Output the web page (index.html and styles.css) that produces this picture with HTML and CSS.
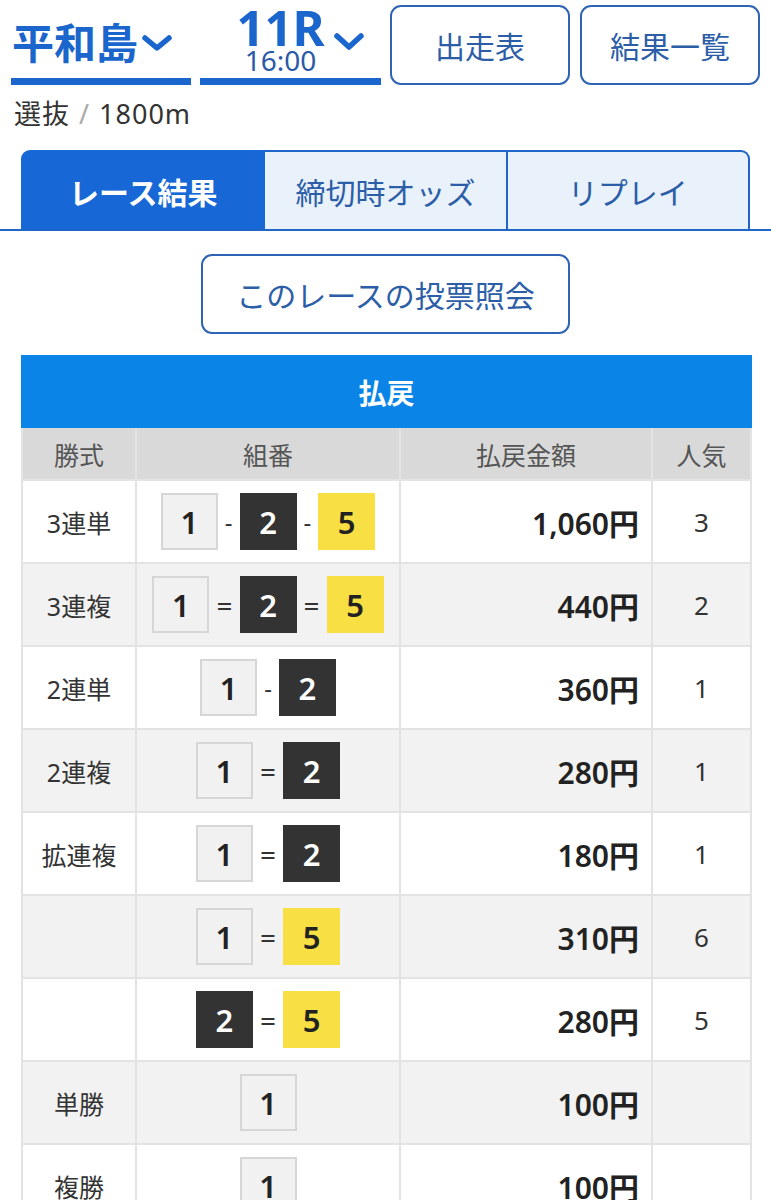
FILE: index.html
```html
<!DOCTYPE html>
<html lang="ja">
<head>
<meta charset="utf-8">
<title>払戻</title>
<link rel="stylesheet" href="styles.css">
</head>
<body>
<header class="top">
  <div class="sel sel-place">
    <span class="place">平和島</span>
    <svg class="chev" viewBox="0 0 32 18" width="32" height="18"><polyline points="4,4 16,14 28,4" fill="none" stroke="#1a66cc" stroke-width="5.5" stroke-linecap="round" stroke-linejoin="round"/></svg>
  </div>
  <div class="sel sel-race">
    <div class="race">
      <span class="rno">11R</span>
      <span class="rtime">16:00</span>
    </div>
    <svg class="chev" viewBox="0 0 32 20" width="32" height="20"><polyline points="4,4 16,15 28,4" fill="none" stroke="#1a66cc" stroke-width="5.5" stroke-linecap="round" stroke-linejoin="round"/></svg>
  </div>
  <a class="hbtn">出走表</a>
  <a class="hbtn">結果一覧</a>
</header>
<div class="info">選抜 <span class="slash">/</span> 1800m</div>
<nav class="tabwrap">
  <div class="tabs">
    <div class="tab active">レース結果</div>
    <div class="tab">締切時オッズ</div>
    <div class="tab">リプレイ</div>
  </div>
</nav>
<div class="btnrow"><a class="vbtn">このレースの投票照会</a></div>
<table class="pay">
  <colgroup><col class="c1"><col class="c2"><col class="c3"><col class="c4"></colgroup>
  <thead>
    <tr><th colspan="4" class="title">払戻</th></tr>
    <tr class="hd"><th>勝式</th><th>組番</th><th>払戻金額</th><th>人気</th></tr>
  </thead>
  <tbody>
    <tr><td class="kind">3連単</td><td><div class="combo"><span class="b b1">1</span><span class="sep">-</span><span class="b b2">2</span><span class="sep">-</span><span class="b b5">5</span></div></td><td class="amt">1,060円</td><td class="pop">3</td></tr>
    <tr class="g"><td class="kind">3連複</td><td><div class="combo eq"><span class="b b1">1</span><span class="sep">=</span><span class="b b2">2</span><span class="sep">=</span><span class="b b5">5</span></div></td><td class="amt">440円</td><td class="pop">2</td></tr>
    <tr><td class="kind">2連単</td><td><div class="combo"><span class="b b1">1</span><span class="sep">-</span><span class="b b2">2</span></div></td><td class="amt">360円</td><td class="pop">1</td></tr>
    <tr class="g"><td class="kind">2連複</td><td><div class="combo eq"><span class="b b1">1</span><span class="sep">=</span><span class="b b2">2</span></div></td><td class="amt">280円</td><td class="pop">1</td></tr>
    <tr><td class="kind">拡連複</td><td><div class="combo eq"><span class="b b1">1</span><span class="sep">=</span><span class="b b2">2</span></div></td><td class="amt">180円</td><td class="pop">1</td></tr>
    <tr class="g"><td class="kind"></td><td><div class="combo eq"><span class="b b1">1</span><span class="sep">=</span><span class="b b5">5</span></div></td><td class="amt">310円</td><td class="pop">6</td></tr>
    <tr><td class="kind"></td><td><div class="combo eq"><span class="b b2">2</span><span class="sep">=</span><span class="b b5">5</span></div></td><td class="amt">280円</td><td class="pop">5</td></tr>
    <tr class="g"><td class="kind">単勝</td><td><div class="combo"><span class="b b1">1</span></div></td><td class="amt">100円</td><td class="pop"></td></tr>
    <tr><td class="kind">複勝</td><td><div class="combo"><span class="b b1">1</span></div></td><td class="amt">100円</td><td class="pop"></td></tr>
  </tbody>
</table>
</body>
</html>
```
FILE: styles.css
```css
* { box-sizing: border-box; }
body {
  margin: 0;
  width: 771px;
  background: #fff;
  color: #333;
  font-family: "Noto Sans CJK JP", "Noto Sans", sans-serif;
}
.top {
  display: flex;
  gap: 9px;
  padding: 5px 0 0 11px;
}
.sel {
  width: 180px;
  height: 80px;
  border-bottom: 7px solid #1a66cc;
  display: flex;
  align-items: center;
  color: #1a66cc;
}
.sel-place { padding-left: 1px; }
.place {
  font-size: 42px;
  font-weight: 700;
  line-height: 1;
  margin-top: -2px;
}
.sel-place .chev { margin-left: 3px; margin-top: 2px; }
.sel-race { width: 181px; justify-content: center; padding-left: 20px; }
.race {
  align-self: flex-start;
  margin-top: 3px;
  display: flex;
  flex-direction: column;
  align-items: center;
}
.rno {
  font-family: "Noto Sans", sans-serif;
  font-size: 49px;
  font-weight: 700;
  line-height: 38px;
}
.rtime {
  font-family: "Noto Sans", sans-serif;
  font-size: 28px;
  line-height: 24px;
  color: #2a5aa8;
  margin-top: 2px;
}
.sel-race .chev { margin-left: 8px; margin-top: 0; }
.hbtn {
  width: 180px;
  height: 80px;
  border: 2px solid #2f64b4;
  border-radius: 11px;
  display: flex;
  align-items: center;
  justify-content: center;
  font-size: 30px;
  color: #2c5ea8;
}
.hbtn + .hbtn { margin-left: 1px; }
.info {
  margin: 13px 0 0 14px;
  font-family: "Noto Sans", "Noto Sans CJK JP", sans-serif;
  font-size: 27px;
  line-height: 32px;
  color: #333;
  letter-spacing: 1px;
}
.slash { color: #aaa; margin: 0 1px; }
.tabwrap {
  margin-top: 20px;
  padding: 0 21px;
  border-bottom: 2px solid #1f66c8;
}
.tabs {
  display: flex;
  height: 79px;
}
.tab {
  flex: 1;
  display: flex;
  align-items: center;
  justify-content: center;
  background: #e9f1fb;
  color: #2c5ea8;
  font-size: 30px;
  border: 2px solid #1f66c8;
  border-bottom: none;
  border-left: none;
}
.tab:first-child { border-radius: 9px 0 0 0; border-left: 2px solid #1f66c8; }
.tab:last-child { border-radius: 0 9px 0 0; }
.tab.active {
  background: #1768d6;
  color: #fff;
  font-weight: 700;
  border-color: #1768d6;
}
.btnrow {
  display: flex;
  justify-content: center;
  margin-top: 23px;
}
.vbtn {
  width: 369px;
  height: 80px;
  border: 2px solid #2f64b4;
  border-radius: 11px;
  display: flex;
  align-items: center;
  justify-content: center;
  font-size: 30px;
  color: #2c5ea8;
}
.pay {
  margin: 21px 0 0 21px;
  width: 729px;
  border-collapse: collapse;
  table-layout: fixed;
}
.c1 { width: 114px; }
.c2 { width: 264px; }
.c3 { width: 252px; }
.c4 { width: 99px; }
.pay th, .pay td {
  border: 2px solid #e3e3e3;
  padding: 0;
}
.pay .title {
  height: 71px;
  background: #0a85e7;
  border-color: #0a85e7;
  color: #fff;
  font-size: 28px;
  font-weight: 700;
}
.hd th {
  height: 53px;
  background: #d9d9d9;
  color: #555;
  font-size: 25px;
  font-weight: 400;
}
.pay tbody tr { height: 83px; }
.pay tbody tr.g { background: #f2f2f2; }
.kind {
  text-align: center;
  font-family: "Noto Sans", "Noto Sans CJK JP", sans-serif;
  font-size: 25px;
  color: #333;
}
.combo {
  display: flex;
  align-items: center;
  justify-content: center;
  gap: 7px;
}
.b {
  width: 57px;
  height: 57px;
  display: flex;
  align-items: center;
  justify-content: center;
  font-family: "Noto Sans", sans-serif;
  font-size: 31px;
  font-weight: 600;
}
.b1 { background: #f1f1f1; border: 2px solid #d6d6d6; color: #222; }
.b2 { background: #333; color: #fff; }
.b5 { background: #f8df44; color: #222; }
.sep { font-size: 24px; color: #333; font-family: "Noto Sans", sans-serif; }
.combo.eq .sep { font-size: 28px; }
.amt {
  text-align: right;
  padding-right: 12px !important;
  font-family: "Noto Sans", "Noto Sans CJK JP", sans-serif;
  font-size: 30px;
  font-weight: 600;
  color: #222;
}
.pop {
  text-align: center;
  font-family: "Noto Sans", sans-serif;
  font-size: 26px;
  color: #333;
}
```
